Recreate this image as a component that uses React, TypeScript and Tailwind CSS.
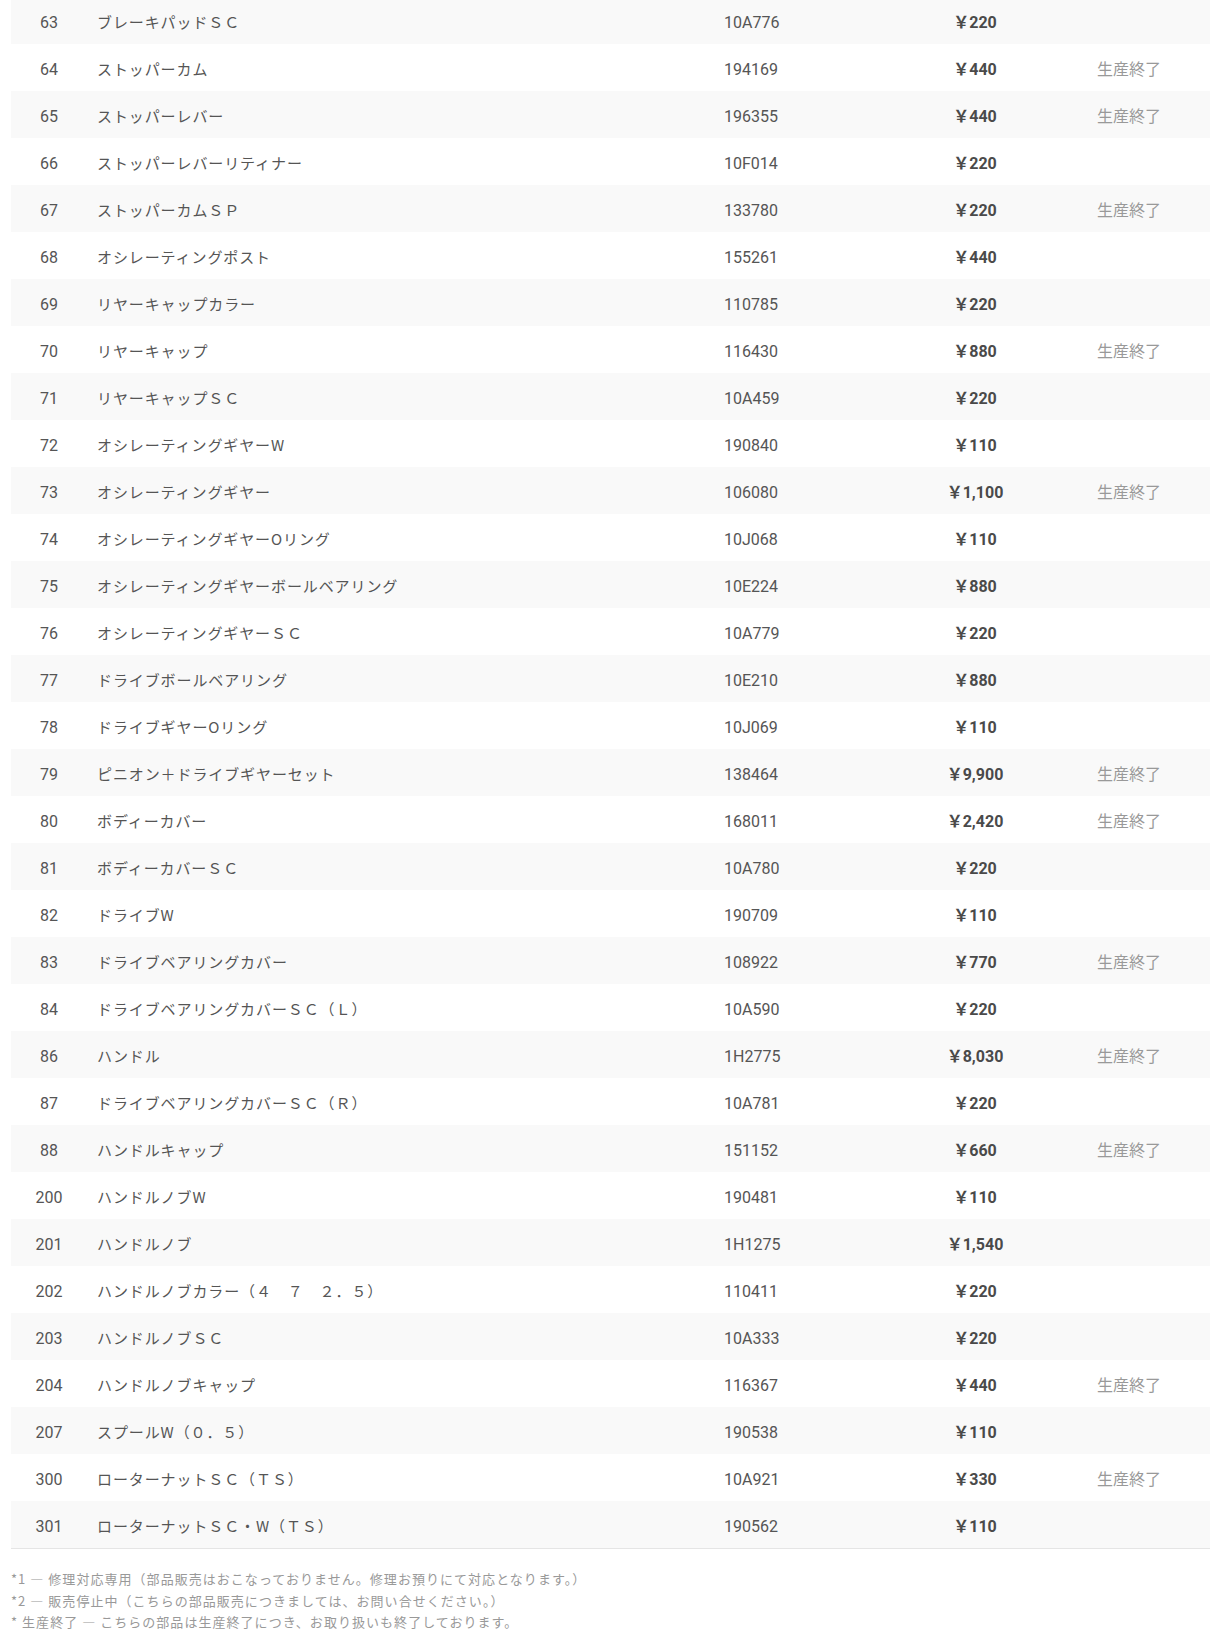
const parts = [
  { no: "63", name: "ブレーキパッドＳＣ", code: "10A776", price: "220", end: false },
  { no: "64", name: "ストッパーカム", code: "194169", price: "440", end: true },
  { no: "65", name: "ストッパーレバー", code: "196355", price: "440", end: true },
  { no: "66", name: "ストッパーレバーリティナー", code: "10F014", price: "220", end: false },
  { no: "67", name: "ストッパーカムＳＰ", code: "133780", price: "220", end: true },
  { no: "68", name: "オシレーティングポスト", code: "155261", price: "440", end: false },
  { no: "69", name: "リヤーキャップカラー", code: "110785", price: "220", end: false },
  { no: "70", name: "リヤーキャップ", code: "116430", price: "880", end: true },
  { no: "71", name: "リヤーキャップＳＣ", code: "10A459", price: "220", end: false },
  { no: "72", name: "オシレーティングギヤーW", code: "190840", price: "110", end: false },
  { no: "73", name: "オシレーティングギヤー", code: "106080", price: "1,100", end: true },
  { no: "74", name: "オシレーティングギヤーOリング", code: "10J068", price: "110", end: false },
  { no: "75", name: "オシレーティングギヤーボールベアリング", code: "10E224", price: "880", end: false },
  { no: "76", name: "オシレーティングギヤーＳＣ", code: "10A779", price: "220", end: false },
  { no: "77", name: "ドライブボールベアリング", code: "10E210", price: "880", end: false },
  { no: "78", name: "ドライブギヤーOリング", code: "10J069", price: "110", end: false },
  { no: "79", name: "ピニオン＋ドライブギヤーセット", code: "138464", price: "9,900", end: true },
  { no: "80", name: "ボディーカバー", code: "168011", price: "2,420", end: true },
  { no: "81", name: "ボディーカバーＳＣ", code: "10A780", price: "220", end: false },
  { no: "82", name: "ドライブW", code: "190709", price: "110", end: false },
  { no: "83", name: "ドライブベアリングカバー", code: "108922", price: "770", end: true },
  { no: "84", name: "ドライブベアリングカバーＳＣ（Ｌ）", code: "10A590", price: "220", end: false },
  { no: "86", name: "ハンドル", code: "1H2775", price: "8,030", end: true },
  { no: "87", name: "ドライブベアリングカバーＳＣ（Ｒ）", code: "10A781", price: "220", end: false },
  { no: "88", name: "ハンドルキャップ", code: "151152", price: "660", end: true },
  { no: "200", name: "ハンドルノブW", code: "190481", price: "110", end: false },
  { no: "201", name: "ハンドルノブ", code: "1H1275", price: "1,540", end: false },
  { no: "202", name: "ハンドルノブカラー（４　７　２．５）", code: "110411", price: "220", end: false },
  { no: "203", name: "ハンドルノブＳＣ", code: "10A333", price: "220", end: false },
  { no: "204", name: "ハンドルノブキャップ", code: "116367", price: "440", end: true },
  { no: "207", name: "スプールW（０．５）", code: "190538", price: "110", end: false },
  { no: "300", name: "ローターナットＳＣ（ＴＳ）", code: "10A921", price: "330", end: true },
  { no: "301", name: "ローターナットＳＣ・W（ＴＳ）", code: "190562", price: "110", end: false },
]

const jp = "font-['Noto_Sans_CJK_JP',sans-serif]"
const num = "font-['Roboto','Noto_Sans_CJK_JP',sans-serif]"

const App = () => {
  return (
    <div className="w-full bg-white pl-[11px] overflow-hidden">
      <div className="-mt-[3px] border-b border-[#e5e5e5]">
        {parts.map((p, i) => (
          <div
            key={p.no}
            className={`grid grid-cols-[76px_627px_160px_202px_1fr] items-center h-[47px] ${i % 2 === 0 ? "bg-[#f9f9f9]" : "bg-white"}`}
          >
            <div className={`${num} mt-[4px] text-center text-[16px] text-[#555]`}>{p.no}</div>
            <div className={`${jp} mt-[4px] pl-[10px] text-[15px] tracking-[0.06em] text-[#555]`}>{p.name}</div>
            <div className={`${num} mt-[4px] pl-[10px] text-[16px] text-[#555]`}>{p.code}</div>
            <div className={`${num} mt-[4px] text-center text-[16px] font-bold text-[#4a4a4a]`}>
              ￥{p.price}
            </div>
            <div className={`${jp} pl-[21px] text-[16px] text-[#999]`}>{p.end ? "生産終了" : ""}</div>
          </div>
        ))}
      </div>
      <div className={`${jp} pt-[19px] text-[13px] tracking-[0.08em] leading-[21.5px] text-[#999]`}>
        <p>*1 ― 修理対応専用（部品販売はおこなっておりません。修理お預りにて対応となります。）</p>
        <p>*2 ― 販売停止中（こちらの部品販売につきましては、お問い合せください。）</p>
        <p>* 生産終了 ― こちらの部品は生産終了につき、お取り扱いも終了しております。</p>
      </div>
    </div>
  )
}

export default App
